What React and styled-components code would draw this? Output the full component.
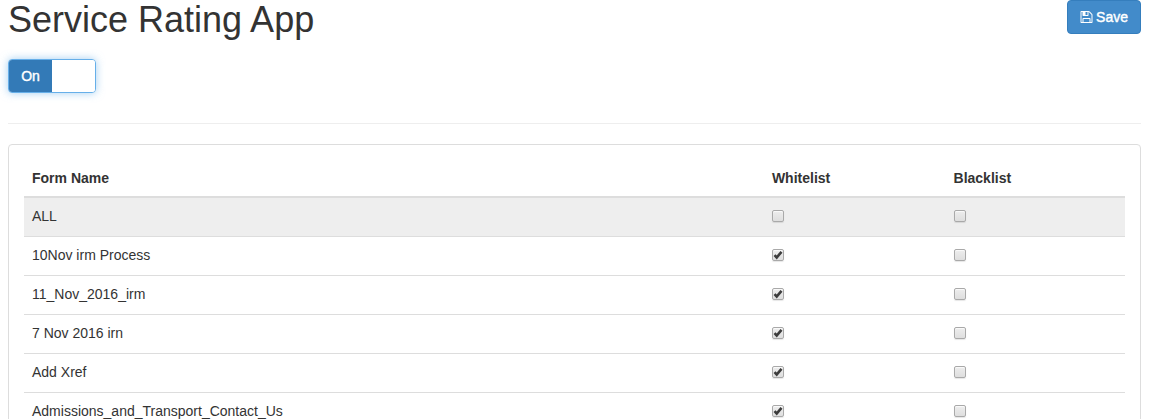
import { useState } from 'react';
import styled, { createGlobalStyle, css } from 'styled-components';

const GlobalStyle = createGlobalStyle`
  *, *::before, *::after {
    box-sizing: border-box;
  }

  body {
    margin: 0;
    background: #ffffff;
    color: #333333;
    font-family: Arial, 'Liberation Sans', sans-serif;
    font-size: 14px;
    line-height: 20px;
  }

  button {
    font-family: inherit;
    font-size: 14px;
    -webkit-text-stroke: 0.4px currentColor;
  }
`;

const Page = styled.main`
  padding: 0 13px 20px 8px;
`;

const Header = styled.header`
  display: flex;
  justify-content: space-between;
  align-items: flex-start;
`;

const Title = styled.h1`
  margin: 0;
  font-size: 36px;
  font-weight: 500;
  line-height: 40px;
`;

const SaveButton = styled.button`
  display: flex;
  align-items: center;
  gap: 3px;
  height: 34px;
  padding: 0 12px;
  border: 1px solid #357ebd;
  border-radius: 4px;
  background: #428bca;
  color: #ffffff;
  line-height: 20px;
  cursor: pointer;

  &:hover {
    background: #3276b1;
  }
`;

const ToggleButton = styled.button`
  display: grid;
  grid-template-columns: 1fr 1fr;
  width: 88px;
  height: 34px;
  margin-top: 19px;
  padding: 0;
  overflow: hidden;
  border: 1px solid #66afe9;
  border-radius: 4px;
  background: #ffffff;
  box-shadow: 0 0 8px rgba(102, 175, 233, 0.6);
  line-height: 32px;
  cursor: pointer;
`;

const ToggleHalf = styled.span`
  background: ${({ $active }) => ($active ? '#337ab7' : '#ffffff')};
  color: #ffffff;
`;

const Divider = styled.hr`
  margin: 30px 0 20px;
  border: 0;
  border-top: 1px solid #eeeeee;
`;

const Panel = styled.section`
  padding: 15px;
  border: 1px solid #dddddd;
  border-radius: 4px;
`;

const Table = styled.table`
  width: 100%;
  table-layout: fixed;
  border-collapse: separate;
  border-spacing: 0;
`;

const HeadCell = styled.th`
  width: ${({ $width }) => $width};
  padding: 8px;
  border-bottom: 2px solid #dddddd;
  text-align: left;
  font-weight: bold;
`;

const Row = styled.tr`
  ${({ $shaded }) => $shaded && css`
    background: #eeeeee;
  `}
`;

const Cell = styled.td`
  height: 38px;
  padding: 8px 8px 10px;
  vertical-align: top;

  ${Row} + ${Row} & {
    height: 39px;
    border-top: 1px solid #dddddd;
  }
`;

const CheckLabel = styled.label`
  display: grid;
  width: 12px;
  height: 12px;
  margin-top: 4px;
`;

const CheckInput = styled.input`
  grid-area: 1 / 1;
  appearance: none;
  width: 12px;
  height: 12px;
  margin: 0;
  border: 1px solid #a9a9a9;
  border-radius: 2px;
  background: linear-gradient(#ededed, #dedede);
  box-shadow: 0 1px 1px rgba(0, 0, 0, 0.1), inset 0 1px 1px rgba(255, 255, 255, 0.75);
`;

const CheckMark = styled.svg`
  grid-area: 1 / 1;
  z-index: 1;
  pointer-events: none;
`;

const SaveIcon = () => (
  <svg width="13" height="14" viewBox="0 0 1536 1792" fill="currentColor" aria-hidden="true">
    <path d="M384 1536h768v-384H384v384zm896 0h128V640q0-14-10-38.500t-20-34.500l-281-281q-10-10-34-20t-39-10v416q0 40-28 68t-68 28H352q-40 0-68-28t-28-68V256H128v1280h128v-416q0-40 28-68t68-28h832q40 0 68 28t28 68v416zM896 608V288q0-13-9.500-22.500T864 256H672q-13 0-22.500 9.500T640 288v320q0 13 9.500 22.500T672 640h192q13 0 22.500-9.500T896 608zm640 32v928q0 40-28 68t-68 28H96q-40 0-68-28t-28-68V224q0-40 28-68t68-28h928q40 0 88 20t76 48l280 280q28 28 48 76t20 88z" />
  </svg>
);

const Checkbox = ({ label, checked, onChange }) => (
  <CheckLabel>
    <CheckInput type="checkbox" aria-label={label} checked={checked} onChange={onChange} />
    {checked && (
      <CheckMark width="12" height="12" viewBox="0 0 12 12" fill="none" stroke="#3c3c3c" strokeWidth="2.6">
        <path d="M2.500 6.200 4.700 8.500 9.500 2.800" />
      </CheckMark>
    )}
  </CheckLabel>
);

const initialForms = [
  { name: 'ALL', whitelist: false, blacklist: false },
  { name: '10Nov irm Process', whitelist: true, blacklist: false },
  { name: '11_Nov_2016_irm', whitelist: true, blacklist: false },
  { name: '7 Nov 2016 irn', whitelist: true, blacklist: false },
  { name: 'Add Xref', whitelist: true, blacklist: false },
  { name: 'Admissions_and_Transport_Contact_Us', whitelist: true, blacklist: false }
];

const App = () => {
  const [enabled, setEnabled] = useState(true);
  const [forms, setForms] = useState(initialForms);

  const handleChange = (name, list) => {
    setForms(forms.map((form) => (
      form.name === name ? { ...form, [list]: !form[list] } : form
    )));
  };

  return (
    <Page>
      <GlobalStyle />
      <Header>
        <Title>Service Rating App</Title>
        <SaveButton type="button">
          <SaveIcon />
          Save
        </SaveButton>
      </Header>

      <ToggleButton type="button" aria-pressed={enabled} onClick={() => setEnabled(!enabled)}>
        <ToggleHalf $active={enabled}>{enabled && 'On'}</ToggleHalf>
        <ToggleHalf $active={!enabled}>{!enabled && 'Off'}</ToggleHalf>
      </ToggleButton>

      <Divider />

      <Panel>
        <Table>
          <thead>
            <tr>
              <HeadCell>Form Name</HeadCell>
              <HeadCell $width="16.5%">Whitelist</HeadCell>
              <HeadCell $width="16.3%">Blacklist</HeadCell>
            </tr>
          </thead>
          <tbody>
            {forms.map((form) => (
              <Row key={form.name} $shaded={form.name === 'ALL'}>
                <Cell>{form.name}</Cell>
                <Cell>
                  <Checkbox
                    label={`Whitelist ${form.name}`}
                    checked={form.whitelist}
                    onChange={() => handleChange(form.name, 'whitelist')}
                  />
                </Cell>
                <Cell>
                  <Checkbox
                    label={`Blacklist ${form.name}`}
                    checked={form.blacklist}
                    onChange={() => handleChange(form.name, 'blacklist')}
                  />
                </Cell>
              </Row>
            ))}
          </tbody>
        </Table>
      </Panel>
    </Page>
  );
};

export default App;
